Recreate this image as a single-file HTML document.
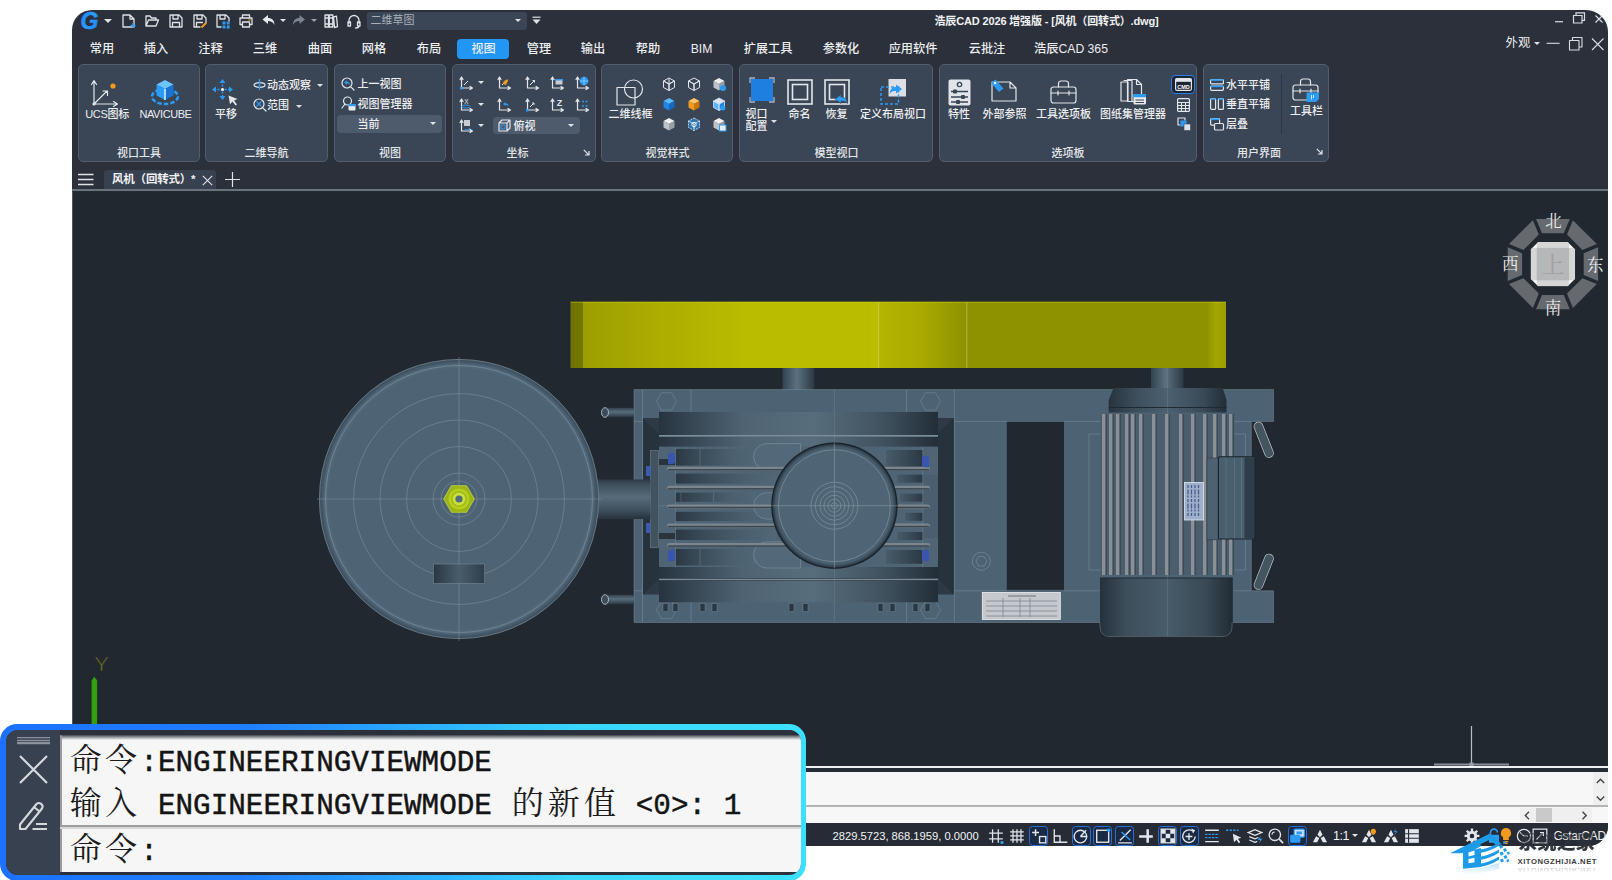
<!DOCTYPE html>
<html lang="zh-CN"><head><meta charset="utf-8"><title>浩辰CAD 2026</title>
<style>
*{box-sizing:border-box;margin:0;padding:0}
html,body{width:1612px;height:880px;overflow:hidden;background:#fff}
body{position:relative;font-family:"Liberation Sans","Noto Sans CJK SC",sans-serif;color:#e6e8ea;font-size:12px}
.abs{position:absolute}
#win{position:absolute;left:72px;top:10px;width:1535.5px;height:836px;background:#2b303b;border-radius:20px 22px 20px 0;overflow:hidden}
.t{position:absolute;white-space:nowrap;line-height:1;color:#e8eaec}
.c{transform:translateX(-50%)}
.tab{position:absolute;top:43.3px;font-size:12.2px;font-weight:500;white-space:nowrap;line-height:1;color:#eceef0;transform:translateX(-50%)}
.panel{position:absolute;top:63.5px;height:98.7px;background:#3a4555;border:1px solid #525d6f;border-radius:5px}
.plabel{position:absolute;top:148.3px;font-size:11px;font-weight:500;line-height:1;white-space:nowrap;color:#e4e7ea;transform:translateX(-50%)}
.rt{position:absolute;margin-top:.5px;font-size:11px;font-weight:500;line-height:1;white-space:nowrap;color:#eceef0}
.rtc{transform:translateX(-50%)}
svg{position:absolute;overflow:visible}
.cj{position:relative;left:-0.2px;letter-spacing:3.16px;font-family:"Noto Serif CJK SC",serif;font-size:32px;-webkit-text-stroke:0;color:#1c1c1c;line-height:1;vertical-align:baseline}
.cj2{letter-spacing:4.2px;left:2.1px}
.ar{position:absolute;width:0;height:0;border-left:3.5px solid transparent;border-right:3.5px solid transparent;border-top:4px solid #e0e3e6}
</style></head>
<body>
<div id="win"></div>
<svg style="left:0;top:0" width="1612" height="880" viewBox="0 0 1612 880">
<defs>
<linearGradient id="gy" x1="0" x2="1" y1="0" y2="0"><stop offset="0" stop-color="#6f7100"/><stop offset="0.019" stop-color="#757700"/><stop offset="0.0195" stop-color="#9c9e00"/><stop offset="0.1" stop-color="#a7a900"/><stop offset="0.27" stop-color="#babc00"/><stop offset="0.47" stop-color="#babc00"/><stop offset="0.4705" stop-color="#b3b500"/><stop offset="0.53" stop-color="#aaac00"/><stop offset="0.6" stop-color="#909300"/><stop offset="0.604" stop-color="#8e9100"/><stop offset="0.97" stop-color="#8e9100"/><stop offset="0.985" stop-color="#a3a500"/><stop offset="1" stop-color="#9b9d00"/></linearGradient>
<linearGradient id="gcylv" x1="0" x2="0" y1="0" y2="1"><stop offset="0" stop-color="#2c3945"/><stop offset="0.12" stop-color="#3d4e5b"/><stop offset="0.45" stop-color="#576c7b"/><stop offset="0.8" stop-color="#3c4c59"/><stop offset="1" stop-color="#27333d"/></linearGradient>
<linearGradient id="gcylh" x1="0" x2="1" y1="0" y2="0"><stop offset="0" stop-color="#33424e"/><stop offset="0.45" stop-color="#5b7080"/><stop offset="1" stop-color="#2c3944"/></linearGradient>
<linearGradient id="gbar" x1="0" x2="1" y1="0" y2="0"><stop offset="0" stop-color="#27343f"/><stop offset="0.3" stop-color="#4f6373"/><stop offset="0.55" stop-color="#586d7c"/><stop offset="0.8" stop-color="#41525f"/><stop offset="1" stop-color="#222e38"/></linearGradient>
<linearGradient id="gband" x1="0" x2="1" y1="0" y2="0"><stop offset="0" stop-color="#2b3844"/><stop offset="0.3" stop-color="#3b4c59"/><stop offset="0.7" stop-color="#4b5f6e"/><stop offset="1" stop-color="#526777"/></linearGradient>
<linearGradient id="gbandr" x1="0" x2="1" y1="0" y2="0"><stop offset="0" stop-color="#485b69"/><stop offset="0.5" stop-color="#3a4a57"/><stop offset="1" stop-color="#2b3844"/></linearGradient>
<linearGradient id="gseg" x1="0" x2="1" y1="0" y2="0"><stop offset="0" stop-color="#2a3742"/><stop offset="0.5" stop-color="#4a5d6b"/><stop offset="1" stop-color="#2f3d49"/></linearGradient>
<linearGradient id="gcap" x1="0" x2="1" y1="0" y2="0"><stop offset="0" stop-color="#27343e"/><stop offset="0.25" stop-color="#3f505d"/><stop offset="0.5" stop-color="#4c606f"/><stop offset="0.8" stop-color="#3a4a57"/><stop offset="1" stop-color="#222d37"/></linearGradient>
<linearGradient id="gfan" x1="0" x2="1" y1="0" y2="0"><stop offset="0" stop-color="#25313b"/><stop offset="0.2" stop-color="#3d4e5b"/><stop offset="0.5" stop-color="#495c6a"/><stop offset="0.8" stop-color="#394955"/><stop offset="1" stop-color="#202b34"/></linearGradient>
<radialGradient id="gdisc" cx="0.5" cy="0.5" r="0.5"><stop offset="0" stop-color="#4e6373"/><stop offset="0.93" stop-color="#4e6373"/><stop offset="0.955" stop-color="#566c7b"/><stop offset="0.975" stop-color="#45596a"/><stop offset="1" stop-color="#3a4b58"/></radialGradient>
<radialGradient id="ggear" cx="0.5" cy="0.5" r="0.5"><stop offset="0" stop-color="#506575"/><stop offset="0.9" stop-color="#4f6474"/><stop offset="0.95" stop-color="#465a69"/><stop offset="1" stop-color="#2b3843"/></radialGradient>
<clipPath id="cv"><rect x="72" y="191.3" width="1535.5" height="575"/></clipPath>
</defs>
<rect x="72" y="191.3" width="1535.5" height="575" fill="#212830"/>
<g clip-path="url(#cv)">
<rect x="72" y="191.5" width="1" height="575" fill="#50565f"/>
<rect x="570.5" y="301.8" width="655.5" height="66.2" fill="url(#gy)"/>
<path d="M878.6 302v66 M966.8 302v66" stroke="#d2d46a" stroke-width=".8" opacity=".7"/>
<path d="M570.5 302.2h655.5" stroke="#d4d620" stroke-width=".8" opacity=".6"/>
<rect x="782.5" y="368" width="31.8" height="44" fill="url(#gcylh)"/>
<rect x="1151" y="368" width="32.5" height="21" fill="url(#gcylh)"/>
<path d="M634 389.6H1273.6V421.4H1251.3V590.8H1273.6V622.5H634z" fill="#4d6272"/>
<rect x="1006.8" y="422" width="57.2" height="167.8" fill="#212830"/>
<g fill="none" stroke="#8fa0ac" stroke-width=".7" opacity=".55"><path d="M634 389.6H1273.6V421.4H1251.3V590.8H1273.6V622.5H634z"/><path d="M642.5 389.6v233 M691 389.6v28 M691 595v27.5 M906.6 389.6v28 M906.6 595v27.5 M954.3 389.6v233 M634 421.4h9 M634 590.8h9 M954.3 421.4h52.5 M954.3 590.8h52.5 M1064 421.4h37 M1064 590.8h37 M1234 421.4h17 M1234 590.8h17"/><rect x="1089" y="434" width="156.6" height="136"/></g>
<polygon points="676.4,401.4 671.4,410.1 661.4,410.1 656.4,401.4 661.4,392.7 671.4,392.7" fill="none" stroke="#8fa0ac" stroke-width=".8" opacity="0.45"/>
<polygon points="940.5,401.4 935.5,410.1 925.5,410.1 920.5,401.4 925.5,392.7 935.5,392.7" fill="none" stroke="#8fa0ac" stroke-width=".8" opacity="0.45"/>
<polygon points="676.4,610 671.4,618.7 661.4,618.7 656.4,610 661.4,601.3 671.4,601.3" fill="none" stroke="#8fa0ac" stroke-width=".8" opacity="0.45"/>
<polygon points="940.5,610 935.5,618.7 925.5,618.7 920.5,610 925.5,601.3 935.5,601.3" fill="none" stroke="#8fa0ac" stroke-width=".8" opacity="0.45"/>
<circle cx="981.4" cy="561.2" r="9" fill="none" stroke="#8fa0ac" stroke-width=".8" opacity=".6"/><polygon points="986.9,561.2 984.1,566 978.6,566 975.9,561.2 978.6,556.4 984.1,556.4" fill="none" stroke="#8fa0ac" stroke-width=".8" opacity="0.6"/>
<rect x="605" y="407.7" width="29" height="9.6" fill="url(#gcylv)"/>
<ellipse cx="605" cy="412.5" rx="3.5" ry="4.8" fill="#3c4c59" stroke="#c9d2d8" stroke-width=".8"/>
<rect x="605" y="594.7" width="29" height="9.6" fill="url(#gcylv)"/>
<ellipse cx="605" cy="599.5" rx="3.5" ry="4.8" fill="#3c4c59" stroke="#c9d2d8" stroke-width=".8"/>
<rect x="643" y="418" width="310.7" height="176.5" fill="#2d3a45"/>
<path d="M643 418l16 16v144.5l-16 16z M953.7 418l-16 16v144.5l16 16z" fill="#26323c"/>
<rect x="659" y="434" width="279" height="144.5" fill="#4f6474"/>
<rect x="659" y="412" width="279" height="23" fill="url(#gbar)"/>
<rect x="659" y="437" width="279" height="9.6" fill="url(#gbar)"/>
<rect x="659" y="567" width="279" height="11" fill="url(#gbar)"/>
<rect x="659" y="580.7" width="279" height="21.5" fill="url(#gbar)"/>
<path d="M659 435.8h279 M659 579.6h279" stroke="#aab6be" stroke-width=".9" opacity=".8"/>
<rect x="675.5" y="449" width="80.5" height="16.5" fill="url(#gband)"/>
<rect x="675.5" y="473.6" width="100.5" height="10" fill="url(#gband)"/>
<rect x="675.5" y="492.7" width="80.5" height="9.100000000000023" fill="url(#gband)"/>
<rect x="675.5" y="511.8" width="100.5" height="9.199999999999989" fill="url(#gband)"/>
<rect x="675.5" y="529.6" width="100.5" height="10.399999999999977" fill="url(#gband)"/>
<rect x="675.5" y="549" width="80.5" height="16.5" fill="url(#gband)"/>
<rect x="886" y="450" width="36.799999999999955" height="16.69999999999999" fill="url(#gbandr)"/>
<rect x="897" y="474.6" width="25.799999999999955" height="8" fill="url(#gbandr)"/>
<rect x="900" y="493.7" width="22.799999999999955" height="8" fill="url(#gbandr)"/>
<rect x="905" y="512.8" width="17.799999999999955" height="8" fill="url(#gbandr)"/>
<rect x="897" y="532" width="25.799999999999955" height="8" fill="url(#gbandr)"/>
<rect x="886" y="550" width="36.799999999999955" height="13.799999999999955" fill="url(#gbandr)"/>
<rect x="922.8" y="475" width="15.2" height="63" fill="#4a5e6d"/>
<path d="M700 449v16.5 M700 549v16.5 M681 492.7v9 M713.6 492.7v9 M675.5 447.3v120 M922.8 447.3v120" stroke="#8fa0ac" stroke-width=".6" opacity=".55"/>
<path d="M766.6 443.6a13 13.199999999999989 0 0 0 0 26.399999999999977h34v-26.399999999999977z" fill="#536878" stroke="#8193a0" stroke-width=".6"/>
<path d="M766.6 492.7a13 13.150000000000006 0 0 0 0 26.30000000000001h34v-26.30000000000001z" fill="#536878" stroke="#8193a0" stroke-width=".6"/>
<path d="M766.6 541.8a13 13.100000000000023 0 0 0 0 26.200000000000045h34v-26.200000000000045z" fill="#536878" stroke="#8193a0" stroke-width=".6"/>
<rect x="667" y="466.7" width="263" height="4" rx="2" fill="#7b858d"/>
<rect x="668" y="469" width="261" height="1.5" fill="#3b464f"/>
<rect x="667" y="485.8" width="263" height="4" rx="2" fill="#7b858d"/>
<rect x="668" y="488.1" width="261" height="1.5" fill="#3b464f"/>
<rect x="667" y="504.4" width="263" height="4" rx="2" fill="#7b858d"/>
<rect x="668" y="506.7" width="261" height="1.5" fill="#3b464f"/>
<rect x="667" y="523.5" width="263" height="4" rx="2" fill="#7b858d"/>
<rect x="668" y="525.8" width="261" height="1.5" fill="#3b464f"/>
<rect x="667" y="543" width="263" height="4" rx="2" fill="#7b858d"/>
<rect x="668" y="545.3" width="261" height="1.5" fill="#3b464f"/>
<rect x="650.5" y="450.7" width="8" height="97" fill="#42535f" stroke="#7f919d" stroke-width=".5"/>
<rect x="659" y="459" width="16" height="6" fill="#2a343d"/><rect x="659" y="533" width="16" height="6" fill="#2a343d"/>
<rect x="646" y="466" width="4.5" height="10" fill="#3d5ab0"/><rect x="646" y="523" width="4.5" height="10" fill="#3d5ab0"/>
<path d="M668 454q5 -3 7 0v9q-2 2 -7 1z" fill="#3a55ad"/>
<path d="M668 551q5 -3 7 0v9q-2 2 -7 1z" fill="#3a55ad"/>
<path d="M929 457q-5 -3 -7 0v9q2 2 7 1z" fill="#3a55ad"/>
<path d="M929 551q-5 -3 -7 0v9q2 2 7 1z" fill="#3a55ad"/>
<circle cx="834.4" cy="505.7" r="63.2" fill="#1b242c"/>
<circle cx="834.4" cy="505.7" r="61.8" fill="url(#ggear)"/>
<g fill="none" stroke="#8fa0ac" stroke-width=".7" opacity=".75"><circle cx="834.4" cy="505.7" r="56"/><circle cx="834.4" cy="505.7" r="3"/><circle cx="834.4" cy="505.7" r="6.5"/><circle cx="834.4" cy="505.7" r="10.5"/><circle cx="834.4" cy="505.7" r="14.5"/><circle cx="834.4" cy="505.7" r="19"/><circle cx="834.4" cy="505.7" r="23.5"/><path d="M772 505.7h125 M834.4 443v125"/></g>
<path d="M834.4 389.6v53 M834.4 568v54 M659 505.7h113" stroke="#8fa0ac" stroke-width=".6" opacity=".4"/>
<rect x="663" y="603.5" width="5" height="8" fill="#2b3843" stroke="#7f919d" stroke-width=".4"/>
<rect x="673" y="603.5" width="5" height="8" fill="#2b3843" stroke="#7f919d" stroke-width=".4"/>
<rect x="700" y="603.5" width="5" height="8" fill="#2b3843" stroke="#7f919d" stroke-width=".4"/>
<rect x="712" y="603.5" width="5" height="8" fill="#2b3843" stroke="#7f919d" stroke-width=".4"/>
<rect x="789" y="603.5" width="5" height="8" fill="#2b3843" stroke="#7f919d" stroke-width=".4"/>
<rect x="803" y="603.5" width="5" height="8" fill="#2b3843" stroke="#7f919d" stroke-width=".4"/>
<rect x="878" y="603.5" width="5" height="8" fill="#2b3843" stroke="#7f919d" stroke-width=".4"/>
<rect x="890" y="603.5" width="5" height="8" fill="#2b3843" stroke="#7f919d" stroke-width=".4"/>
<rect x="913" y="603.5" width="5" height="8" fill="#2b3843" stroke="#7f919d" stroke-width=".4"/>
<rect x="925" y="603.5" width="5" height="8" fill="#2b3843" stroke="#7f919d" stroke-width=".4"/>
<rect x="597" y="479.5" width="53.5" height="39.5" fill="url(#gcylv)"/>
<circle cx="459" cy="499" r="140" fill="url(#gdisc)"/>
<g fill="none" stroke="#8fa0ac" stroke-width=".8" opacity=".55"><circle cx="459" cy="499" r="139.6" stroke="#a9b7c0" opacity=".9"/><circle cx="459" cy="499" r="133.5"/><circle cx="459" cy="499" r="105.4"/><circle cx="459" cy="499" r="79"/><circle cx="459" cy="499" r="52.5"/><circle cx="459" cy="499" r="26"/><circle cx="459" cy="499" r="18"/><path d="M317 499h284 M459 357v284"/></g>
<rect x="433.4" y="564" width="51.2" height="19.5" fill="url(#gseg)" stroke="#7f919d" stroke-width=".5"/>
<polygon points="474.3,499 466.6,512.3 451.4,512.3 443.7,499 451.3,485.7 466.6,485.7" fill="#9db516" stroke="#c2d83c" stroke-width=".8"/>
<circle cx="459" cy="499" r="10.5" fill="#b7d020"/><circle cx="459" cy="499" r="8" fill="#a3bc18"/><circle cx="459" cy="499" r="6.3" fill="#c9e040"/><circle cx="459" cy="499" r="3.6" fill="#54697a"/>
<path d="M1113.5 388H1222.7L1226.5 400V412.5H1108.7V400z" fill="url(#gcap)"/>
<path d="M1108.7 407.5h117.8" stroke="#1f2932" stroke-width="1"/>
<rect x="1100.7" y="414" width="133.7" height="161" fill="#4a5e6d"/>
<rect x="1102" y="414" width="3.6" height="161" fill="#8b9096"/><rect x="1105.6" y="414" width="1.3" height="161" fill="#3a4954"/>
<rect x="1109" y="414" width="3.6" height="161" fill="#8b9096"/><rect x="1112.6" y="414" width="1.3" height="161" fill="#3a4954"/>
<rect x="1116" y="414" width="3.6" height="161" fill="#8b9096"/><rect x="1119.6" y="414" width="1.3" height="161" fill="#3a4954"/>
<rect x="1125" y="414" width="3.6" height="161" fill="#8b9096"/><rect x="1128.6" y="414" width="1.3" height="161" fill="#3a4954"/>
<rect x="1131" y="414" width="3.6" height="161" fill="#8b9096"/><rect x="1134.6" y="414" width="1.3" height="161" fill="#3a4954"/>
<rect x="1139" y="414" width="3.6" height="161" fill="#8b9096"/><rect x="1142.6" y="414" width="1.3" height="161" fill="#3a4954"/>
<rect x="1152" y="414" width="3.6" height="161" fill="#8b9096"/><rect x="1155.6" y="414" width="1.3" height="161" fill="#3a4954"/>
<rect x="1165" y="414" width="3.6" height="161" fill="#8b9096"/><rect x="1168.6" y="414" width="1.3" height="161" fill="#3a4954"/>
<rect x="1179" y="414" width="3.6" height="161" fill="#8b9096"/><rect x="1182.6" y="414" width="1.3" height="161" fill="#3a4954"/>
<rect x="1191" y="414" width="3.6" height="161" fill="#8b9096"/><rect x="1194.6" y="414" width="1.3" height="161" fill="#3a4954"/>
<rect x="1203" y="414" width="3.6" height="161" fill="#8b9096"/><rect x="1206.6" y="414" width="1.3" height="161" fill="#3a4954"/>
<rect x="1213" y="414" width="3.6" height="161" fill="#8b9096"/><rect x="1216.6" y="414" width="1.3" height="161" fill="#3a4954"/>
<rect x="1222" y="414" width="3.6" height="161" fill="#8b9096"/><rect x="1225.6" y="414" width="1.3" height="161" fill="#3a4954"/>
<rect x="1229" y="414" width="3.6" height="161" fill="#8b9096"/><rect x="1232.6" y="414" width="1.3" height="161" fill="#3a4954"/>
<rect x="1207" y="458" width="11.4" height="81.8" fill="#4d6171" stroke="#2c3842" stroke-width=".6"/>
<rect x="1218.4" y="456.8" width="36.4" height="82.2" rx="1.5" fill="#4a5f6e" stroke="#19222a" stroke-width="1.1"/>
<rect x="1244.5" y="457.4" width="9.8" height="81" fill="#2e3d47"/>
<path d="M1226 457.5v81 M1234.5 457.5v81 M1241.5 457.5v81" stroke="#62778a" stroke-width=".8" opacity=".8"/>
<rect x="1184.5" y="482.5" width="19" height="37.5" fill="#9fb0cc" stroke="#dfe6f0" stroke-width=".8"/>
<path d="M1188 485v32 M1191.5 485v32 M1195 485v32 M1198.5 485v32" stroke="#4a5c86" stroke-width="1.3" stroke-dasharray="3 1.5 5 1 2 1.5"/>
<path d="M1100 578H1232.8V626a10 10 0 0 1 -10 10H1110a10 10 0 0 1 -10 -10z" fill="url(#gfan)"/>
<path d="M1100 578h132.8" stroke="#1f2932" stroke-width="1"/>
<path d="M1167.3 368v268" stroke="#8fa0ac" stroke-width=".6" opacity=".45"/>
<path d="M1100 622.5v5a9 9 0 0 0 9 9h114a9 9 0 0 0 9-9v-5" fill="none" stroke="#8fa0ac" stroke-width=".7" opacity=".6"/>
<path d="M1258.5 426.5l10.5 26.5" stroke="#b9c4cc" stroke-width="9.6" stroke-linecap="round"/><path d="M1258.5 426.5l10.5 26.5" stroke="#44555f" stroke-width="8.2" stroke-linecap="round"/>
<path d="M1269 558.5l-10.5 26.5" stroke="#b9c4cc" stroke-width="9.6" stroke-linecap="round"/><path d="M1269 558.5l-10.5 26.5" stroke="#44555f" stroke-width="8.2" stroke-linecap="round"/>
<rect x="982.3" y="592.4" width="78" height="27" fill="#c5c9cd" stroke="#eef0f2" stroke-width=".8"/>
<path d="M986 601h71 M986 606h71 M986 611h71 M986 616h71 M1003 598v19 M1020 598v19 M1030 598v19" stroke="#7d858d" stroke-width=".8"/><path d="M1008 596h28" stroke="#6a727a" stroke-width="1"/>
<path d="M91.6 725V680.5L94.3 676.8 97.1 680.5V725z" fill="#33a00f"/>
<text x="101.6" y="670.8" text-anchor="middle" font-family="Liberation Sans,sans-serif" font-size="19.5" textLength="15" lengthAdjust="spacingAndGlyphs" fill="#707122" stroke="#212830" stroke-width=".6" paint-order="fill stroke">Y</text>
<path d="M1471.5 726v39" stroke="#b9bec4" stroke-width="1.2"/><path d="M1434 764.5h75" stroke="#8b9097" stroke-width="2"/><rect x="1469.5" y="762.5" width="4" height="4" fill="#9aa0a7"/>
</g>
<polygon points="1536,218.9 1569.8,218.9 1563.8,233.3 1542,233.3" fill="#66696d"/>
<polygon points="1572.9,220.2 1596.8,244.1 1582.4,250 1567,234.6" fill="#66696d"/>
<polygon points="1598.1,247.2 1598.1,281 1583.7,275 1583.7,253.2" fill="#66696d"/>
<polygon points="1596.8,284.1 1572.9,308 1567,293.6 1582.4,278.2" fill="#66696d"/>
<polygon points="1569.8,309.3 1536,309.3 1542,294.9 1563.8,294.9" fill="#66696d"/>
<polygon points="1532.9,308 1509,284.1 1523.4,278.2 1538.8,293.6" fill="#66696d"/>
<polygon points="1507.7,281 1507.7,247.2 1522.1,253.2 1522.1,275" fill="#66696d"/>
<polygon points="1509,244.1 1532.9,220.2 1538.8,234.6 1523.4,250" fill="#66696d"/>
<clipPath id="nvc"><path d="M1538.2 241.90000000000003H1567.6000000000001L1575.1000000000001 249.40000000000003V278.8L1567.6000000000001 286.3H1538.2L1530.7 278.8V249.40000000000003z"/></clipPath>
<g clip-path="url(#nvc)"><rect x="1530.7" y="241.90000000000003" width="44.4" height="44.4" fill="#fbfbfb"/>
<rect x="1536.7" y="241.90000000000003" width="32.4" height="44.4" fill="#d6d6d6"/><rect x="1530.7" y="247.90000000000003" width="44.4" height="32.4" fill="#d6d6d6"/>
<rect x="1536.7" y="247.90000000000003" width="32.4" height="32.4" fill="#b6b7b8"/></g>
<text x="1552.9" y="272.6" font-family="Noto Serif CJK SC,serif" text-anchor="middle" font-size="23" fill="#a0a1a2">上</text>
<text x="1553.4" y="227.3" font-family="Noto Serif CJK SC,serif" text-anchor="middle" font-size="16.5" fill="#ececec">北</text>
<text x="1552.9" y="313.90000000000003" font-family="Noto Serif CJK SC,serif" text-anchor="middle" font-size="16.5" fill="#ececec">南</text>
<text x="1510.2" y="270.40000000000003" font-family="Noto Serif CJK SC,serif" text-anchor="middle" font-size="16.5" fill="#ececec">西</text>
<text x="1595.2" y="270.90000000000003" font-family="Noto Serif CJK SC,serif" text-anchor="middle" font-size="16.5" fill="#ececec">东</text>
</svg>
<div id="ui">
<svg style="left:79px;top:11px" width="22" height="20" viewBox="0 0 22 20" ><defs><linearGradient id="lg" x1="0" y1="0" x2="1" y2="1"><stop offset="0" stop-color="#1e7bff"/><stop offset=".5" stop-color="#2a9dff"/><stop offset="1" stop-color="#1a78f0"/></linearGradient></defs><text x="1.5" y="18.2" font-family="Liberation Sans,sans-serif" font-size="23" font-weight="bold" font-style="italic" fill="url(#lg)" stroke="url(#lg)" stroke-width=".6">G</text></svg>
<div class="ar" style="left:103.5px;top:18.8px;border-left-width:4px;border-right-width:4px;border-top-width:4.5px"></div><svg style="left:122px;top:14px" width="14" height="14" viewBox="0 0 14 14" ><path d="M1 1h7l4 4v8h-11z M8 1v4h4" fill="none" stroke="#dfe2e6" stroke-width="1.3" stroke-linejoin="round" stroke-linecap="round"/><path d="M11 9v5M8.5 11.5h5" stroke="#2b9bf4" stroke-width="1.4" fill="none"/></svg>
<svg style="left:145px;top:14px" width="14" height="14" viewBox="0 0 14 14" ><path d="M1 12V2h4l1.5 2H11v2 M1 12l2.5-6H13.5l-2.5 6z" fill="none" stroke="#dfe2e6" stroke-width="1.3" stroke-linejoin="round" stroke-linecap="round"/></svg>
<svg style="left:169px;top:14px" width="14" height="14" viewBox="0 0 14 14" ><path d="M1 1h9l3 3v9h-12z M4 1v4h5V1 M3.5 13V8.5h7V13" fill="none" stroke="#dfe2e6" stroke-width="1.3" stroke-linejoin="round" stroke-linecap="round"/></svg>
<svg style="left:192.5px;top:14px" width="14" height="14" viewBox="0 0 14 14" ><path d="M1 1h9l3 3v5 M1 1v12h6 M4 1v4h5V1 M3.5 13V8.5h6" fill="none" stroke="#dfe2e6" stroke-width="1.3" stroke-linejoin="round" stroke-linecap="round"/><path d="M8.5 13.5l4.5-4.5" stroke="#f39a1e" stroke-width="2" fill="none"/></svg>
<svg style="left:216px;top:14px" width="14" height="14" viewBox="0 0 14 14" ><path d="M1 1h9l3 3v3 M1 1v12h4 M4 1v4h5V1" fill="none" stroke="#dfe2e6" stroke-width="1.3" stroke-linejoin="round" stroke-linecap="round"/><g fill="#2b9bf4"><rect x="6.5" y="7.5" width="3" height="3"/><rect x="10.7" y="7.5" width="3" height="3"/><rect x="6.5" y="11.5" width="3" height="3"/><rect x="10.7" y="11.5" width="3" height="3"/></g></svg>
<svg style="left:239px;top:14px" width="14" height="14" viewBox="0 0 14 14" ><path d="M3.5 4V1h7v3 M3.5 10.5H1V4h12v6.5h-2.5 M3.5 8h7v5h-7z" fill="none" stroke="#dfe2e6" stroke-width="1.3" stroke-linejoin="round" stroke-linecap="round"/><path d="M9.5 6h2" stroke="#f39a1e" stroke-width="1.3"/></svg>
<svg style="left:262px;top:14px" width="14" height="13" viewBox="0 0 14 13" ><path d="M6 1L0.5 5.5 6 10V7c3 0 5 1 6.5 4C12.5 6.5 10 4 6 4z" fill="#e6e8ea"/></svg>
<div class="ar" style="left:280px;top:19px;border-left-width:3px;border-right-width:3px;border-top-width:3.5px"></div><svg style="left:292px;top:14px" width="14" height="13" viewBox="0 0 14 13" ><path d="M7.5 1L13 5.5 7.5 10V7c-3 0-5 1-6.5 4C1 6.5 3.5 4 7.5 4z" fill="#7d8590"/></svg>
<div class="ar" style="left:311px;top:19px;border-left-width:3px;border-right-width:3px;border-top-width:3.5px;border-top-color:#9aa1ab"></div><svg style="left:324px;top:14px" width="14" height="14" viewBox="0 0 14 14" ><path d="M1 1h3.5v12H1z M5.3 1h3.5v12H5.3z M9.5 3l3-.8 1 10.5-3 .8z M1 4h3.5 M5.3 4h3.5 M1 10h3.5 M5.3 10h3.5" fill="none" stroke="#dfe2e6" stroke-width="1.3" stroke-linejoin="round" stroke-linecap="round"/></svg>
<svg style="left:347px;top:14px" width="14" height="14" viewBox="0 0 14 14" ><path d="M2 9V6.5a5 5 0 0 1 10 0V9 M1 8h2.5v4H1z M10.5 8H13v4h-2.5z M12 12c0 1.5-1.5 2-3.5 2" fill="none" stroke="#dfe2e6" stroke-width="1.3" stroke-linejoin="round" stroke-linecap="round"/></svg>
<div class="abs" style="left:366.5px;top:12px;width:160px;height:18px;background:#3a4555;border-radius:3px"></div><div class="t" style="left:370.5px;top:15px;font-size:11px;color:#a9b0b9">二维草图</div><div class="ar" style="left:514.5px;top:19px;border-left-width:3px;border-right-width:3px;border-top-width:3.5px"></div><svg style="left:532px;top:16px" width="9" height="9" viewBox="0 0 9 9" ><path d="M0.5 1.2h8" stroke="#dfe2e6" stroke-width="1.2"/><path d="M0.5 3.5h8l-4 4.5z" fill="#dfe2e6"/></svg>
<div class="t" style="left:934.5px;top:16.2px;font-size:11px;font-weight:bold;letter-spacing:-0.15px;color:#f1f2f4" id="ttl">浩辰CAD 2026 增强版 - [风机（回转式）.dwg]</div><svg style="left:1554px;top:12px" width="50" height="13" viewBox="0 0 50 13" ><path d="M1 9.7h8" stroke="#d9dce0" stroke-width="1.2"/><path d="M19.5 3.5h8.5v7.5h-8.5z M22 3.5V.8h8.5v7.5H28" fill="none" stroke="#d9dce0" stroke-width="1.2"/><path d="M41.5 3.5l7 7 M48.5 3.5l-7 7" stroke="#d9dce0" stroke-width="1.2"/></svg>
<div class="t" style="left:1505.5px;top:37px;font-size:12.4px">外观</div><div class="ar" style="left:1533.5px;top:42px;border-left-width:3px;border-right-width:3px;border-top-width:3.5px"></div><svg style="left:1546px;top:36px" width="60" height="16" viewBox="0 0 60 16" ><path d="M.6 7.3h13" stroke="#d9dce0" stroke-width="1.1"/><path d="M23.5 4.5h9.5v9.5h-9.5z M26.5 4.5V1.5h9.5V11H33" fill="none" stroke="#d9dce0" stroke-width="1.1" stroke-linejoin="round"/><path d="M46 2.5l11.5 11.5 M57.5 2.5l-11.5 11.5" stroke="#d9dce0" stroke-width="1.1"/></svg>
<div class="abs" style="left:457px;top:38.5px;width:51.5px;height:20px;background:#2196f3;border-radius:4px"></div>
<div class="tab" style="left:102px">常用</div>
<div class="tab" style="left:156px">插入</div>
<div class="tab" style="left:210.5px">注释</div>
<div class="tab" style="left:265px">三维</div>
<div class="tab" style="left:320px">曲面</div>
<div class="tab" style="left:374px">网格</div>
<div class="tab" style="left:429px">布局</div>
<div class="tab" style="left:483.5px">视图</div>
<div class="tab" style="left:539px">管理</div>
<div class="tab" style="left:593px">输出</div>
<div class="tab" style="left:648px">帮助</div>
<div class="tab" style="left:701.5px">BIM</div>
<div class="tab" style="left:768px">扩展工具</div>
<div class="tab" style="left:841px">参数化</div>
<div class="tab" style="left:913px">应用软件</div>
<div class="tab" style="left:987px">云批注</div>
<div class="tab" style="left:1071px">浩辰CAD 365</div>
<div class="panel" style="left:77.5px;width:122.5px"></div>
<div class="plabel" style="left:139px">视口工具</div>
<div class="panel" style="left:205px;width:122.5px"></div>
<div class="plabel" style="left:266.5px">二维导航</div>
<div class="panel" style="left:333.5px;width:112.5px"></div>
<div class="plabel" style="left:390px">视图</div>
<div class="panel" style="left:452px;width:144px"></div>
<div class="plabel" style="left:517.5px">坐标</div>
<div class="panel" style="left:601px;width:132px"></div>
<div class="plabel" style="left:667.5px">视觉样式</div>
<div class="panel" style="left:739px;width:193.5px"></div>
<div class="plabel" style="left:836.5px">模型视口</div>
<div class="panel" style="left:938.5px;width:258.5px"></div>
<div class="plabel" style="left:1068px">选项板</div>
<div class="panel" style="left:1202.5px;width:126px"></div>
<div class="plabel" style="left:1259px">用户界面</div>
<svg style="left:90px;top:78px" width="30" height="30" viewBox="0 0 30 30" ><path d="M4 3v23h23 M1.5 6.5l2.5-4 2.5 4 M23.5 23.5l4 2.5-4 2.5 M4 26l13-13 M13 13h4.5v4.5" fill="none" stroke="#e3e6ea" stroke-width="1.2" stroke-linejoin="round" stroke-linecap="round"/><circle cx="4" cy="26" r="1.6" fill="#e3e6ea"/><circle cx="23" cy="8" r="2.6" fill="#f39a1e"/></svg>

<div class="rt rtc" style="left:107px;top:108.5px;letter-spacing:-0.3px">UCS图标</div>
<svg style="left:150px;top:79px" width="30" height="27" viewBox="0 0 30 27" ><ellipse cx="15" cy="17.5" rx="13" ry="7.5" fill="none" stroke="#2b9bf4" stroke-width="2.6" stroke-dasharray="4.5 2"/><path d="M15 1l8.5 4.5-8.5 4.5-8.5-4.5z" fill="#6cc4ff"/><path d="M6.5 5.5l8.5 4.5v11l-8.5-4.5z" fill="#2b9bf4"/><path d="M23.5 5.5l-8.5 4.5v11l8.5-4.5z" fill="#1a73d0"/><path d="M15 10v11" stroke="#d6ecff" stroke-width="1.6"/></svg>

<div class="rt rtc" style="left:165.5px;top:108.5px;letter-spacing:-0.42px">NAVICUBE</div>
<svg style="left:211px;top:79px" width="30" height="28" viewBox="0 0 30 28" ><path d="M11.5 2v17 M3 10.5h17" stroke="#2b9bf4" stroke-width="1.3" stroke-dasharray="2.2 1.3"/><path d="M11.5 0l3 4h-6z M11.5 21l3-4h-6z M1 10.5l4-3v6z M22 10.5l-4-3v6z" fill="#2b9bf4"/><circle cx="11.5" cy="10.5" r="1.5" fill="#fff"/><path d="M17.5 16.5l9 3.5-3.5 1.5 3 4-1.5 1-3-4-2.5 2.8z" fill="#e6e8ea"/></svg>

<div class="rt rtc" style="left:226px;top:108.5px">平移</div>
<svg style="left:253px;top:78px" width="13" height="13" viewBox="0 0 13 13" ><ellipse cx="6.5" cy="7" rx="5.5" ry="2.3" fill="none" stroke="#e3e6ea" stroke-width="1.2" stroke-linejoin="round" stroke-linecap="round"/><path d="M6.5 1v11" stroke="#2b9bf4" stroke-width="1.4"/></svg>

<div class="rt" style="left:267px;top:79.5px">动态观察</div>
<div class="ar" style="left:316.5px;top:84px;border-left-width:3px;border-right-width:3px;border-top-width:3.5px"></div>
<svg style="left:253px;top:97.5px" width="14" height="14" viewBox="0 0 14 14" ><circle cx="6" cy="6" r="5" fill="none" stroke="#e3e6ea" stroke-width="1.2" stroke-linejoin="round" stroke-linecap="round"/><path d="M9.8 9.8l3.2 3.2" fill="none" stroke="#e3e6ea" stroke-width="1.2" stroke-linejoin="round" stroke-linecap="round"/><path d="M3.5 3.5l5 5 M8.5 3.5l-5 5" stroke="#2b9bf4" stroke-width="1.2"/></svg>

<div class="rt" style="left:267px;top:99.5px">范围</div>
<div class="ar" style="left:295.5px;top:104.5px;border-left-width:3px;border-right-width:3px;border-top-width:3.5px"></div>
<svg style="left:341px;top:77px" width="14" height="14" viewBox="0 0 14 14" ><circle cx="6" cy="6" r="5" fill="none" stroke="#e3e6ea" stroke-width="1.2" stroke-linejoin="round" stroke-linecap="round"/><path d="M9.8 9.8l3.2 3.2" fill="none" stroke="#e3e6ea" stroke-width="1.2" stroke-linejoin="round" stroke-linecap="round"/><path d="M6 3.2L3 5.5l3 2.3V6.5c1.5 0 2.5.5 3 1.5 0-2-1-3.3-3-3.3z" fill="#2b9bf4"/></svg>

<div class="rt" style="left:357.5px;top:78px">上一视图</div>
<svg style="left:341px;top:96px" width="15" height="15" viewBox="0 0 15 15" ><circle cx="6.5" cy="5" r="4" fill="none" stroke="#e3e6ea" stroke-width="1.2" stroke-linejoin="round" stroke-linecap="round"/><path d="M4 8l-3 4" fill="none" stroke="#e3e6ea" stroke-width="1.2" stroke-linejoin="round" stroke-linecap="round"/><rect x="7.5" y="8" width="7" height="6.5" rx="1" fill="#e8eaec"/><rect x="7.5" y="8" width="7" height="2.2" fill="#2b9bf4"/></svg>

<div class="rt" style="left:357.5px;top:98px">视图管理器</div>
<div class="abs" style="left:336.5px;top:115px;width:105.5px;height:17.5px;background:#4e5b6d;border-radius:4px"></div>
<div class="rt" style="left:357.5px;top:118.5px">当前</div>
<div class="ar" style="left:430px;top:122px;border-left-width:3px;border-right-width:3px;border-top-width:3.5px"></div>
<svg style="left:458.5px;top:75.5px" width="14" height="14" viewBox="0 0 14 14" ><path d="M2.5 1.5v10.5h10.5 M1 3.5l1.5-2.5 1.5 2.5 M11 10.5l2.5 1.5-2.5 1.5" fill="none" stroke="#e3e6ea" stroke-width="1.2" stroke-linejoin="round" stroke-linecap="round"/><rect x="1" y="11" width="2.5" height="2.5" fill="#2b9bf4"/><path d="M5 9l4-4" stroke="#e3e6ea" stroke-width="1"/></svg>

<svg style="left:458.5px;top:97.5px" width="14" height="14" viewBox="0 0 14 14" ><path d="M2.5 1.5v10.5h10.5 M1 3.5l1.5-2.5 1.5 2.5 M11 10.5l2.5 1.5-2.5 1.5" fill="none" stroke="#e3e6ea" stroke-width="1.2" stroke-linejoin="round" stroke-linecap="round"/><text x="7.5" y="6" text-anchor="middle" font-family="Liberation Sans,sans-serif" font-size="6.5" fill="#e3e6ea">X</text><ellipse cx="7" cy="8.5" rx="4" ry="1.5" fill="none" stroke="#2b9bf4" stroke-width="1"/></svg>

<svg style="left:458.5px;top:118.5px" width="14" height="14" viewBox="0 0 14 14" ><path d="M2.5 1.5v10.5h10.5 M1 3.5l1.5-2.5 1.5 2.5 M11 10.5l2.5 1.5-2.5 1.5" fill="none" stroke="#e3e6ea" stroke-width="1.2" stroke-linejoin="round" stroke-linecap="round"/><rect x="5" y="1" width="6" height="6" fill="#c8ccd2"/><path d="M6 10.5c2 1 4 0 5-1.5" stroke="#2b9bf4" stroke-width="1.2" fill="none"/></svg>

<div class="ar" style="left:477.5px;top:81px;border-left-width:3px;border-right-width:3px;border-top-width:3.5px"></div>
<div class="ar" style="left:477.5px;top:103px;border-left-width:3px;border-right-width:3px;border-top-width:3.5px"></div>
<div class="ar" style="left:477.5px;top:124px;border-left-width:3px;border-right-width:3px;border-top-width:3.5px"></div>
<svg style="left:497px;top:75.5px" width="14" height="14" viewBox="0 0 14 14" ><path d="M2.5 1.5v10.5h10.5 M1 3.5l1.5-2.5 1.5 2.5 M11 10.5l2.5 1.5-2.5 1.5" fill="none" stroke="#e3e6ea" stroke-width="1.2" stroke-linejoin="round" stroke-linecap="round"/><path d="M5 9l4-4" stroke="#e3e6ea" stroke-width="1"/><path d="M6 8c0-3 2-4.5 5.5-4.5L9 9z" fill="#f39a1e"/></svg>

<svg style="left:525px;top:75.5px" width="14" height="14" viewBox="0 0 14 14" ><path d="M2.5 1.5v10.5h10.5 M1 3.5l1.5-2.5 1.5 2.5 M11 10.5l2.5 1.5-2.5 1.5" fill="none" stroke="#e3e6ea" stroke-width="1.2" stroke-linejoin="round" stroke-linecap="round"/><path d="M5 9l4.5-4.5 M7.5 4.5h2v2" stroke="#e3e6ea" stroke-width="1" fill="none"/></svg>

<svg style="left:550px;top:75.5px" width="14" height="14" viewBox="0 0 14 14" ><path d="M2.5 1.5v10.5h10.5 M1 3.5l1.5-2.5 1.5 2.5 M11 10.5l2.5 1.5-2.5 1.5" fill="none" stroke="#e3e6ea" stroke-width="1.2" stroke-linejoin="round" stroke-linecap="round"/><rect x="5.5" y="3" width="7" height="5.5" fill="#c8ccd2"/><rect x="5.5" y="3" width="7" height="1.5" fill="#2b9bf4"/></svg>

<svg style="left:575px;top:75.5px" width="14" height="14" viewBox="0 0 14 14" ><path d="M2.5 1.5v10.5h10.5 M1 3.5l1.5-2.5 1.5 2.5 M11 10.5l2.5 1.5-2.5 1.5" fill="none" stroke="#e3e6ea" stroke-width="1.2" stroke-linejoin="round" stroke-linecap="round"/><circle cx="9" cy="5" r="4.3" fill="#2b9bf4"/><path d="M4.7 5h8.6 M9 .7v8.6" stroke="#9fd2ff" stroke-width=".7"/></svg>

<svg style="left:497px;top:97.5px" width="14" height="14" viewBox="0 0 14 14" ><path d="M2.5 1.5v10.5h10.5 M1 3.5l1.5-2.5 1.5 2.5 M11 10.5l2.5 1.5-2.5 1.5" fill="none" stroke="#e3e6ea" stroke-width="1.2" stroke-linejoin="round" stroke-linecap="round"/><path d="M8.5 4L6 6l2.5 2V7c1.5 0 2.5.5 3 1.5 0-2-1-3.2-3-3.2z" fill="#2b9bf4"/></svg>

<svg style="left:525px;top:97.5px" width="14" height="14" viewBox="0 0 14 14" ><path d="M2.5 1.5v10.5h10.5 M1 3.5l1.5-2.5 1.5 2.5 M11 10.5l2.5 1.5-2.5 1.5" fill="none" stroke="#e3e6ea" stroke-width="1.2" stroke-linejoin="round" stroke-linecap="round"/><rect x="1" y="11" width="2.5" height="2.5" fill="#2b9bf4"/><path d="M5 9l4-4 M7 5h2v2" stroke="#e3e6ea" stroke-width="1" fill="none"/></svg>

<svg style="left:550px;top:97.5px" width="14" height="14" viewBox="0 0 14 14" ><path d="M2.5 1.5v10.5h10.5 M1 3.5l1.5-2.5 1.5 2.5 M11 10.5l2.5 1.5-2.5 1.5" fill="none" stroke="#e3e6ea" stroke-width="1.2" stroke-linejoin="round" stroke-linecap="round"/><text x="9.5" y="8.3" text-anchor="middle" font-family="Liberation Sans,sans-serif" font-weight="bold" font-size="9" fill="#e3e6ea">Z</text></svg>

<svg style="left:575px;top:97.5px" width="14" height="14" viewBox="0 0 14 14" ><path d="M2.5 1.5v10.5h10.5 M1 3.5l1.5-2.5 1.5 2.5 M11 10.5l2.5 1.5-2.5 1.5" fill="none" stroke="#e3e6ea" stroke-width="1.2" stroke-linejoin="round" stroke-linecap="round"/><path d="M7 3.5h6 M7 8h6" stroke="#2b9bf4" stroke-width="1.5" stroke-dasharray="2 1.5"/></svg>

<div class="abs" style="left:493px;top:116.5px;width:87px;height:17.5px;background:#4e5b6d;border-radius:4px"></div>
<svg style="left:498px;top:119px" width="13" height="13" viewBox="0 0 13 13" ><path d="M1 4h8v8H1z M1 4l3-3h8l-3 3 M12 1v8l-3 3" fill="none" stroke="#e3e6ea" stroke-width="1.2" stroke-linejoin="round" stroke-linecap="round"/><path d="M3 6h4v4H3z" fill="none" stroke="#2b9bf4" stroke-width=".9"/></svg>

<div class="rt" style="left:513.5px;top:120px">俯视</div>
<div class="ar" style="left:568px;top:123.5px;border-left-width:3px;border-right-width:3px;border-top-width:3.5px"></div>
<svg style="left:583px;top:149px" width="7" height="7" viewBox="0 0 7 7" ><path d="M.8.8l5 5 M6 2v4H2" stroke="#e3e6ea" stroke-width="1.2" fill="none"/></svg>

<svg style="left:616px;top:78.5px" width="28" height="27" viewBox="0 0 28 27" ><rect x="1" y="8.5" width="18" height="17.5" fill="none" stroke="#e3e6ea" stroke-width="1.2" stroke-linejoin="round" stroke-linecap="round"/><circle cx="17.5" cy="10" r="9" fill="none" stroke="#e3e6ea" stroke-width="1.2" stroke-linejoin="round" stroke-linecap="round"/></svg>

<div class="rt rtc" style="left:630.5px;top:108.5px">二维线框</div>
<svg style="left:662px;top:77px" width="14" height="15" viewBox="0 0 14 15" ><path d="M7 1l5.5 3-5.5 3-5.5-3z M1.5 4l5.5 3v6.5l-5.5-3z M12.5 4l-5.5 3v6.5l5.5-3z M7 7V1.5" fill="none" stroke="#e3e6ea" stroke-width="1"/></svg>

<svg style="left:686.5px;top:77px" width="14" height="15" viewBox="0 0 14 15" ><path d="M7 1l5.5 3-5.5 3-5.5-3z M1.5 4l5.5 3v6.5l-5.5-3z M12.5 4l-5.5 3v6.5l5.5-3z" fill="none" stroke="#e3e6ea" stroke-width="1"/></svg>

<svg style="left:711.5px;top:77px" width="14" height="15" viewBox="0 0 14 15" ><path d="M7 1l5.5 3-5.5 3-5.5-3z" fill="#f0f0f0"/><path d="M1.5 4l5.5 3v6.5l-5.5-3z" fill="#bfc3c8"/><path d="M12.5 4l-5.5 3v6.5l5.5-3z" fill="#9a9fa6"/><circle cx="11" cy="11" r="3" fill="#2b9bf4"/></svg>

<svg style="left:662px;top:96.7px" width="14" height="15" viewBox="0 0 14 15" ><path d="M7 1l5.5 3-5.5 3-5.5-3z" fill="#59b6ff"/><path d="M1.5 4l5.5 3v6.5l-5.5-3z" fill="#1f86e8"/><path d="M12.5 4l-5.5 3v6.5l5.5-3z" fill="#1668c0"/></svg>

<svg style="left:686.5px;top:96.7px" width="14" height="15" viewBox="0 0 14 15" ><path d="M7 1l5.5 3-5.5 3-5.5-3z" fill="#ffc46a"/><path d="M1.5 4l5.5 3v6.5l-5.5-3z" fill="#f39a1e"/><path d="M12.5 4l-5.5 3v6.5l5.5-3z" fill="#c8770a"/></svg>

<svg style="left:711.5px;top:96.7px" width="14" height="15" viewBox="0 0 14 15" ><path d="M7 1l5.5 3-5.5 3-5.5-3z" fill="#dfe6ee"/><path d="M1.5 4l5.5 3v6.5l-5.5-3z" fill="#59b6ff"/><path d="M12.5 4l-5.5 3v6.5l5.5-3z" fill="#1f86e8"/><path d="M7 1l5.5 3-5.5 3-5.5-3z M1.5 4l5.5 3v6.5l-5.5-3z M12.5 4l-5.5 3v6.5l5.5-3z" fill="none" stroke="#cfe6ff" stroke-width=".8"/><circle cx="11" cy="11" r="2.5" fill="#2b9bf4"/></svg>

<svg style="left:662px;top:116.5px" width="14" height="15" viewBox="0 0 14 15" ><path d="M7 1l5.5 3-5.5 3-5.5-3z" fill="#f0f0f0"/><path d="M1.5 4l5.5 3v6.5l-5.5-3z" fill="#bfc3c8"/><path d="M12.5 4l-5.5 3v6.5l5.5-3z" fill="#9a9fa6"/></svg>

<svg style="left:686.5px;top:116.5px" width="14" height="15" viewBox="0 0 14 15" ><path d="M7 1l5.5 3-5.5 3-5.5-3z M1.5 4l5.5 3v6.5l-5.5-3z M12.5 4l-5.5 3v6.5l5.5-3z" fill="#2b9bf4" fill-opacity=".55" stroke="#bfe0ff" stroke-width=".9" stroke-dasharray="2 1"/><circle cx="7" cy="7.5" r="2.2" fill="none" stroke="#fff" stroke-width=".9"/></svg>

<svg style="left:711.5px;top:116.5px" width="14" height="15" viewBox="0 0 14 15" ><path d="M7 1l5.5 3-5.5 3-5.5-3z" fill="#f0f0f0"/><path d="M1.5 4l5.5 3v6.5l-5.5-3z" fill="#bfc3c8"/><path d="M12.5 4l-5.5 3v6.5l5.5-3z" fill="#9a9fa6"/><rect x="7.5" y="8" width="6.5" height="6" fill="#e8eaec" stroke="#2b9bf4" stroke-width="1"/></svg>

<svg style="left:748.5px;top:77px" width="26" height="26" viewBox="0 0 26 26" ><rect x="2" y="2" width="22" height="22" fill="#1f7fe0"/><path d="M1 6V1h5 M20 1h5v5 M25 20v5h-5 M6 25H1v-5" fill="none" stroke="#aab2bc" stroke-width="1.3"/></svg>

<div class="rt" style="left:745.5px;top:108.5px">视口</div>
<div class="rt" style="left:745.5px;top:120.5px">配置</div>
<div class="ar" style="left:771px;top:119.5px;border-left-width:3px;border-right-width:3px;border-top-width:3.5px"></div>
<svg style="left:786.5px;top:79px" width="26" height="26" viewBox="0 0 26 26" ><rect x="1" y="1" width="24" height="24" fill="none" stroke="#e3e6ea" stroke-width="1.6"/><rect x="5.5" y="5.5" width="15" height="15" fill="none" stroke="#e3e6ea" stroke-width="1.6"/></svg>

<div class="rt rtc" style="left:799.5px;top:108.5px">命名</div>
<svg style="left:824px;top:79px" width="26" height="26" viewBox="0 0 26 26" ><rect x="1" y="1" width="24" height="24" fill="none" stroke="#e3e6ea" stroke-width="1.6"/><rect x="5.5" y="5.5" width="15" height="15" fill="none" stroke="#e3e6ea" stroke-width="1.6"/><path d="M17 15.5l-6 4.5 6 4.5v-2.5c3 0 5 .5 6.5 2.5-.5-4-2.5-6.5-6.5-6.5z" fill="#2b9bf4" stroke="#3a4555" stroke-width=".6"/></svg>

<div class="rt rtc" style="left:836.5px;top:108.5px">恢复</div>
<svg style="left:879.5px;top:78px" width="27" height="27" viewBox="0 0 27 27" ><rect x="8.5" y="1" width="17.5" height="17.5" fill="#dcdfe3"/><rect x="1" y="9" width="17.5" height="17" fill="none" stroke="#2b9bf4" stroke-width="1.5" stroke-dasharray="3 2"/><path d="M16 6.5l6 4.5-6 4.5v-2.5c-3 0-5 .5-6.5 3 .5-4.5 2.5-7 6.5-7z" fill="#2b9bf4"/></svg>

<div class="rt rtc" style="left:893px;top:108.5px">定义布局视口</div>
<svg style="left:947.5px;top:79px" width="23" height="27" viewBox="0 0 23 27" ><rect x=".5" y=".5" width="22" height="26" rx="2" fill="#e1e4e8"/><circle cx="11.5" cy="5.5" r="2.8" fill="#3a4555"/><circle cx="11.5" cy="5.5" r="1.5" fill="#e1e4e8"/><path d="M3 12.5h17 M3 18h17 M3 23h17" stroke="#3a4555" stroke-width="1.5"/><rect x="5" y="10.5" width="4" height="4" rx="1" fill="#3a4555"/><rect x="13" y="16" width="4" height="4" rx="1" fill="#3a4555"/><rect x="8" y="21" width="4" height="4" rx="1" fill="#3a4555"/></svg>

<div class="rt rtc" style="left:959px;top:108.5px">特性</div>
<svg style="left:990px;top:79px" width="28" height="25" viewBox="0 0 28 25" ><path d="M2 3h18l6 6v13H2z M20 3v6h6" fill="none" stroke="#e3e6ea" stroke-width="1.2" stroke-linejoin="round" stroke-linecap="round"/><path d="M1 4l4.5-3.5 8 9-4.5 3.5z" fill="#2b9bf4"/><circle cx="5" cy="4" r="1.3" fill="#e8f3ff"/></svg>

<div class="rt rtc" style="left:1004.5px;top:108.5px">外部参照</div>
<svg style="left:1049.5px;top:80px" width="27" height="24" viewBox="0 0 27 24" ><rect x="1" y="7" width="25" height="16" rx="2.5" fill="none" stroke="#e3e6ea" stroke-width="1.2" stroke-linejoin="round" stroke-linecap="round"/><path d="M8.5 7V3.5a2.5 2.5 0 0 1 2.5-2.5h5a2.5 2.5 0 0 1 2.5 2.5V7 M1 13h25 M8 11v4 M19 11v4" fill="none" stroke="#e3e6ea" stroke-width="1.2" stroke-linejoin="round" stroke-linecap="round"/></svg>

<div class="rt rtc" style="left:1063.5px;top:108.5px">工具选项板</div>
<svg style="left:1119.5px;top:79px" width="27" height="27" viewBox="0 0 27 27" ><path d="M1 3h7v19H1z M4 1.5h8v20 M7.5 .5h9l5 5v10 M16.5 .5v5h5 M7.5 .5v22h6" fill="none" stroke="#e3e6ea" stroke-width="1.2" stroke-linejoin="round" stroke-linecap="round"/><rect x="13.5" y="15" width="12.5" height="10.5" rx="1.5" fill="#e8eaec"/><rect x="13.5" y="15" width="12.5" height="3.2" rx="1" fill="#2b9bf4"/><path d="M15.5 21h8.5 M15.5 23.5h8.5" stroke="#3a4555" stroke-width="1.1"/></svg>

<div class="rt rtc" style="left:1133px;top:108.5px">图纸集管理器</div>
<div class="abs" style="left:1170.5px;top:74.5px;width:24.5px;height:19.5px;border:1.5px solid #2b7fe8;border-radius:4px;background:#1d2533"></div>
<svg style="left:1174.5px;top:78px" width="17" height="13" viewBox="0 0 17 13" ><rect x=".6" y=".6" width="15.8" height="11.8" rx="1.5" fill="#1d2533" stroke="#e3e6ea" stroke-width="1.2"/><rect x=".6" y=".6" width="15.8" height="3.2" fill="#e3e6ea"/><text x="8.5" y="10.5" text-anchor="middle" font-family="Liberation Sans,sans-serif" font-weight="bold" font-size="5.5" fill="#fff">CMD</text></svg>

<svg style="left:1176.5px;top:98px" width="13" height="14" viewBox="0 0 13 14" ><rect x=".6" y=".6" width="11.8" height="12.8" rx="1" fill="none" stroke="#e3e6ea" stroke-width="1.2" stroke-linejoin="round" stroke-linecap="round"/><path d="M.6 4.5h11.8 M.6 7.5h11.8 M.6 10.5h11.8 M4.5 4.5v9 M8.5 4.5v9" stroke="#e3e6ea" stroke-width="1"/></svg>

<svg style="left:1176.5px;top:117px" width="14" height="14" viewBox="0 0 14 14" ><path d="M1 1h7v2 M1 1v7h2" fill="none" stroke="#e3e6ea" stroke-width="1.2" stroke-linejoin="round" stroke-linecap="round"/><rect x="3.5" y="3.5" width="6" height="6" fill="#2b9bf4"/><rect x="7" y="7" width="6.5" height="6.5" fill="#dfe2e6" stroke="#3a4555" stroke-width=".6"/></svg>

<svg style="left:1210px;top:78.5px" width="14" height="12" viewBox="0 0 14 12" ><rect x=".6" y=".6" width="12.8" height="4.3" rx="1" fill="none" stroke="#e3e6ea" stroke-width="1.2" stroke-linejoin="round" stroke-linecap="round"/><rect x=".6" y="7" width="12.8" height="4.3" rx="1" fill="none" stroke="#e3e6ea" stroke-width="1.2" stroke-linejoin="round" stroke-linecap="round"/><path d="M.6 1h12.8" stroke="#2b9bf4" stroke-width="1.6"/><path d="M.6 7.4h12.8" stroke="#2b9bf4" stroke-width="1.6"/></svg>

<div class="rt" style="left:1226px;top:79px">水平平铺</div>
<svg style="left:1210px;top:98px" width="14" height="12" viewBox="0 0 14 12" ><rect x=".6" y=".6" width="5" height="10.8" rx="1" fill="none" stroke="#e3e6ea" stroke-width="1.2" stroke-linejoin="round" stroke-linecap="round"/><rect x="8.4" y=".6" width="5" height="10.8" rx="1" fill="none" stroke="#e3e6ea" stroke-width="1.2" stroke-linejoin="round" stroke-linecap="round"/><path d="M.6 1h5 M8.4 1h5" stroke="#2b9bf4" stroke-width="1.6"/></svg>

<div class="rt" style="left:1226px;top:98.5px">垂直平铺</div>
<svg style="left:1210px;top:117.5px" width="14" height="13" viewBox="0 0 14 13" ><rect x=".6" y=".6" width="9" height="6.5" rx="1" fill="none" stroke="#e3e6ea" stroke-width="1.2" stroke-linejoin="round" stroke-linecap="round"/><path d="M.6 1.2h9" stroke="#2b9bf4" stroke-width="1.8"/><rect x="4.5" y="5.5" width="9" height="6.5" rx="1" fill="#3a4555" stroke="#e3e6ea" stroke-width="1.2"/></svg>

<div class="rt" style="left:1226px;top:118.5px">层叠</div>
<div class="abs" style="left:1281px;top:74px;width:1px;height:60px;background:#2c3440"></div>
<svg style="left:1292px;top:77.5px" width="28" height="25" viewBox="0 0 28 25" ><rect x="1" y="7" width="25" height="15" rx="2.5" fill="none" stroke="#e3e6ea" stroke-width="1.2" stroke-linejoin="round" stroke-linecap="round"/><path d="M8.5 7V3.5a2.5 2.5 0 0 1 2.5-2.5h5a2.5 2.5 0 0 1 2.5 2.5V7 M1 13h25 M8 11v4 M19 11v4" fill="none" stroke="#e3e6ea" stroke-width="1.2" stroke-linejoin="round" stroke-linecap="round"/><path d="M14.5 14.5h12.5v6.5l-3 3h-9.5z" fill="#2b9bf4"/><path d="M19.5 17v4.5 M21.5 17v3" stroke="#cfe8ff" stroke-width="1"/></svg>

<div class="rt rtc" style="left:1306.5px;top:105px">工具栏</div>
<svg style="left:1315.5px;top:148px" width="7" height="7" viewBox="0 0 7 7" ><path d="M.8.8l5 5 M6 2v4H2" stroke="#e3e6ea" stroke-width="1.2" fill="none"/></svg>

<svg style="left:78px;top:173px" width="16" height="13" viewBox="0 0 16 13" ><path d="M0 1.5h15.5 M0 6.5h15.5 M0 11.5h15.5" stroke="#e0e3e6" stroke-width="1.6"/></svg>

<div class="abs" style="left:104px;top:170px;width:112px;height:19.5px;background:#38414f;border-radius:3px 3px 0 0"></div>
<div class="t" style="left:112px;top:173.5px;font-size:11.5px;font-weight:bold;letter-spacing:-0.2px;color:#f0f1f3" id="dtab">风机（回转式）*</div>
<svg style="left:201.5px;top:174.5px" width="11" height="11" viewBox="0 0 11 11" ><path d="M.8.8l9.4 9.4 M10.2.8L.8 10.2" stroke="#dfe2e6" stroke-width="1.1"/></svg>

<svg style="left:224.5px;top:172px" width="15" height="15" viewBox="0 0 15 15" ><path d="M7.5 0v15 M0 7.5h15" stroke="#dfe2e6" stroke-width="1.2"/></svg>

<div class="abs" style="left:72px;top:189px;width:1535.5px;height:2.3px;background:linear-gradient(#5a626e,#7a828e 50%,#5a626e)"></div>
<div class="abs" style="left:72px;top:765.5px;width:1535.5px;height:2px;background:#eef0f2"></div>
<div class="abs" style="left:72px;top:767.5px;width:1535.5px;height:4.5px;background:#262c36"></div>
<div class="abs" style="left:72px;top:772px;width:1535.5px;height:51px;background:#f7f7f7"></div>
<div class="abs" style="left:72px;top:805px;width:1535.5px;height:1.5px;background:#b4b4b4"></div>
<div class="abs" style="left:1593px;top:772px;width:15px;height:33px;background:#efefef"></div>
<svg style="left:1596px;top:778px" width="9" height="24" viewBox="0 0 9 24" ><path d="M.8 5l3.7-3.7L8.2 5 M.8 18.5l3.7 3.7 3.7-3.7" fill="none" stroke="#444" stroke-width="1.4"/></svg>

<div class="abs" style="left:1520px;top:808px;width:72px;height:14px;background:#efefef"></div>
<div class="abs" style="left:1535.5px;top:808px;width:16px;height:14px;background:#c9c9c9"></div>
<svg style="left:1524px;top:810.5px" width="64" height="9" viewBox="0 0 64 9" ><path d="M5 .8L1.3 4.5 5 8.2 M58.5 .8l3.7 3.7-3.7 3.7" fill="none" stroke="#444" stroke-width="1.4"/></svg>

<div class="abs" style="left:72px;top:823px;width:1535.5px;height:23.3px;background:#262b35;border-radius:0 0 20px 0"></div>
<div class="t" style="left:832.5px;top:831px;font-size:11.2px;color:#f2f3f4" id="coord">2829.5723, 868.1959, 0.0000</div>
<svg style="left:987.8199999999999px;top:827.52px" width="15.959999999999999" height="15.959999999999999" viewBox="0 0 14 14" ><path d="M4 1v12 M9 1v12 M1 4.5h12 M1 9.5h12" stroke="#e3e6ea" stroke-width="1.1"/><rect x="11" y="11.5" width="2.5" height="2.5" fill="#2b9bf4"/></svg>

<svg style="left:1009.02px;top:827.52px" width="15.959999999999999" height="15.959999999999999" viewBox="0 0 14 14" ><path d="M3.5 1v12 M7 1v12 M10.5 1v12 M1 3.5h12 M1 7h12 M1 10.5h12" stroke="#e3e6ea" stroke-width="1.1"/></svg>

<div class="abs" style="left:1029px;top:825.5px;width:19px;height:20px;border:1px solid #2a6fd6;border-radius:3.5px;background:#1b2a44"></div>
<svg style="left:1030.52px;top:827.52px" width="15.959999999999999" height="15.959999999999999" viewBox="0 0 14 14" ><path d="M4 1v6 M1 4h6" stroke="#e3e6ea" stroke-width="1.3"/><rect x="7.5" y="7.5" width="5.5" height="5.5" fill="none" stroke="#e3e6ea" stroke-width="1.2"/></svg>

<svg style="left:1051.62px;top:827.52px" width="15.959999999999999" height="15.959999999999999" viewBox="0 0 14 14" ><path d="M2 1v11.5h11.5 M2 7h5v5.5" fill="none" stroke="#e3e6ea" stroke-width="1.2"/></svg>

<div class="abs" style="left:1071.9px;top:825.5px;width:19px;height:20px;border:1px solid #2a6fd6;border-radius:3.5px;background:#1b2a44"></div>
<svg style="left:1073.42px;top:827.52px" width="15.959999999999999" height="15.959999999999999" viewBox="0 0 14 14" ><circle cx="6.5" cy="7.5" r="5.5" fill="none" stroke="#e3e6ea" stroke-width="1.2"/><path d="M6.5 7.5h6 M6.5 7.5l5-5.5" stroke="#e3e6ea" stroke-width="1.2"/></svg>

<div class="abs" style="left:1093px;top:825.5px;width:19px;height:20px;border:1px solid #2a6fd6;border-radius:3.5px;background:#1b2a44"></div>
<svg style="left:1094.52px;top:827.52px" width="15.959999999999999" height="15.959999999999999" viewBox="0 0 14 14" ><rect x="1.5" y="2" width="10.5" height="10.5" fill="none" stroke="#e3e6ea" stroke-width="1.2"/><circle cx="12" cy="2" r="1.6" fill="#2b9bf4"/></svg>

<div class="abs" style="left:1115.4px;top:825.5px;width:19px;height:20px;border:1px solid #2a6fd6;border-radius:3.5px;background:#1b2a44"></div>
<svg style="left:1116.92px;top:827.52px" width="15.959999999999999" height="15.959999999999999" viewBox="0 0 14 14" ><path d="M1 13h12 M2.5 11L12 1.5" stroke="#e3e6ea" stroke-width="1.2"/><path d="M4 3.5l7.5 7" stroke="#2b9bf4" stroke-width="1.3"/></svg>

<svg style="left:1138.42px;top:827.52px" width="15.959999999999999" height="15.959999999999999" viewBox="0 0 14 14" ><path d="M8.5 1v12 M1 7.5h12" stroke="#e3e6ea" stroke-width="2.2"/></svg>

<div class="abs" style="left:1158px;top:825.5px;width:19px;height:20px;border:1px solid #2a6fd6;border-radius:3.5px;background:#1b2a44"></div>
<svg style="left:1159.52px;top:827.52px" width="15.959999999999999" height="15.959999999999999" viewBox="0 0 14 14" ><rect x="1" y="1" width="12" height="12" fill="none" stroke="#e3e6ea" stroke-width="1.1"/><path d="M1 1h4v4H1z M9 1h4v4H9z M5 5h4v4H5z M1 9h4v4H1z M9 9h4v4H9z" fill="#e3e6ea"/></svg>

<div class="abs" style="left:1179.9px;top:825.5px;width:19px;height:20px;border:1px solid #2a6fd6;border-radius:3.5px;background:#1b2a44"></div>
<svg style="left:1181.42px;top:827.52px" width="15.959999999999999" height="15.959999999999999" viewBox="0 0 14 14" ><path d="M12.5 7.5A5.5 5.5 0 1 1 9.5 2.3" fill="none" stroke="#e3e6ea" stroke-width="1.2"/><path d="M7 4.5v6 M4 7.5h6" stroke="#e3e6ea" stroke-width="1.2"/><path d="M9 .5l3.5 1.5-2 2.8z" fill="#e3e6ea"/></svg>

<svg style="left:1203.52px;top:827.52px" width="15.959999999999999" height="15.959999999999999" viewBox="0 0 14 14" ><path d="M1 2h12 M1 12h12" stroke="#e3e6ea" stroke-width="1.2"/><path d="M1 5.5h12 M1 8.5h12" stroke="#2b9bf4" stroke-width="1.1" stroke-dasharray="2 1"/></svg>

<svg style="left:1225.72px;top:827.52px" width="15.959999999999999" height="15.959999999999999" viewBox="0 0 14 14" ><path d="M0 2h11" stroke="#2b9bf4" stroke-width="1.3" stroke-dasharray="2 1.2"/><path d="M6 5l7.5 3.5-3 1 2 3-1.3.9-2-3-2.2 2.2z" fill="#e3e6ea"/></svg>

<svg style="left:1247.02px;top:827.52px" width="15.959999999999999" height="15.959999999999999" viewBox="0 0 14 14" ><path d="M1 4l6-2.5L13 4 7 6.5z M2 7.5l5 2 3-1.2 M2 10.5l5 2 2-.8" fill="none" stroke="#e3e6ea" stroke-width="1.1"/><path d="M12 7l-2.5 3.5h2l-1 3 3-4h-2z" fill="#2b9bf4"/></svg>

<svg style="left:1268.42px;top:827.52px" width="15.959999999999999" height="15.959999999999999" viewBox="0 0 14 14" ><circle cx="6" cy="6" r="5" fill="none" stroke="#e3e6ea" stroke-width="1.2"/><path d="M9.8 9.8l3.5 3.5" stroke="#e3e6ea" stroke-width="1.4"/><path d="M3.5 6a2.5 2.5 0 0 1 2.5-2.5" stroke="#e3e6ea" stroke-width=".9" fill="none"/></svg>

<div class="abs" style="left:1287.8px;top:825.5px;width:19px;height:20px;border:1px solid #2a6fd6;border-radius:3.5px;background:#1b2a44"></div>
<svg style="left:1289.32px;top:827.52px" width="15.959999999999999" height="15.959999999999999" viewBox="0 0 14 14" ><rect x="4.5" y="1" width="9" height="7" rx="1" fill="#cfe4fa" stroke="#2b9bf4" stroke-width="1"/><rect x="6.5" y="3" width="5" height="2.5" fill="#2b9bf4"/><rect x="1" y="6" width="9" height="7" rx="1" fill="#2b9bf4"/></svg>

<svg style="left:1311.62px;top:827.52px" width="15.959999999999999" height="15.959999999999999" viewBox="0 0 14 14" ><path d="M7 1.5L9.2 6 7 8.2 4.8 6z M6.4 8.8L4.6 12.5H.800L3.6 7.3z M7.6 8.8L9.4 12.5H13.2L10.4 7.3z" fill="#e3e6ea"/></svg>

<div class="t" style="left:1333px;top:830.3px;font-size:12.5px;letter-spacing:-0.5px;color:#f2f3f4">1:1</div>
<div class="ar" style="left:1351.5px;top:833.5px;border-left-width:3px;border-right-width:3px;border-top-width:3.5px"></div>
<svg style="left:1361.32px;top:827.52px" width="15.959999999999999" height="15.959999999999999" viewBox="0 0 14 14" ><path d="M7 1.5L9.2 6 7 8.2 4.8 6z M6.4 8.8L4.6 12.5H.800L3.6 7.3z M7.6 8.8L9.4 12.5H13.2L10.4 7.3z" fill="#e3e6ea"/><circle cx="10.8" cy="3" r="2.3" fill="#f39a1e"/><path d="M10 5.5h1.6" stroke="#f39a1e" stroke-width="1"/></svg>

<svg style="left:1382.82px;top:827.52px" width="15.959999999999999" height="15.959999999999999" viewBox="0 0 14 14" ><path d="M7 1.5L9.2 6 7 8.2 4.8 6z M6.4 8.8L4.6 12.5H.800L3.6 7.3z M7.6 8.8L9.4 12.5H13.2L10.4 7.3z" fill="#e3e6ea"/><path d="M11.5 0L9 3.8h2l-1.2 3.2 3.4-4.3h-2.1z" fill="#2b9bf4" stroke="#262b35" stroke-width=".4"/></svg>

<svg style="left:1404.02px;top:827.52px" width="15.959999999999999" height="15.959999999999999" viewBox="0 0 14 14" ><rect x="1" y="1" width="12" height="12" fill="#e3e6ea"/><path d="M4 1v12 M1 5h12 M1 9h12" stroke="#262b35" stroke-width="1"/></svg>

<svg style="left:1464.02px;top:827.52px" width="15.959999999999999" height="15.959999999999999" viewBox="0 0 14 14" ><circle cx="7" cy="7" r="3.3" fill="none" stroke="#e3e6ea" stroke-width="2.6"/><path d="M7 .5v13 M.5 7h13 M2.4 2.4l9.2 9.2 M11.6 2.4l-9.2 9.2" stroke="#e3e6ea" stroke-width="2" stroke-dasharray="2.3 8.4"/><circle cx="7" cy="7" r="1.8" fill="#262b35"/></svg>

<svg style="left:1485.72px;top:827.52px" width="15.959999999999999" height="15.959999999999999" viewBox="0 0 14 14" ><path d="M4 6V4a3 3 0 0 1 6 0" fill="none" stroke="#2b9bf4" stroke-width="1.4"/><rect x="2.5" y="6" width="9" height="7" rx="1" fill="#2b9bf4"/></svg>

<svg style="left:1498.02px;top:827.52px" width="15.959999999999999" height="15.959999999999999" viewBox="0 0 14 14" ><path d="M7 0a4.5 4.5 0 0 0-2.5 8.2V10.5h5V8.2A4.5 4.5 0 0 0 7 0z" fill="#f39a1e"/><path d="M5 12h4 M5.5 13.6h3" stroke="#f39a1e" stroke-width="1.1"/></svg>

<svg style="left:1515.82px;top:827.52px" width="15.959999999999999" height="15.959999999999999" viewBox="0 0 14 14" ><circle cx="7" cy="7" r="5.8" fill="none" stroke="#e3e6ea" stroke-width="1.1"/><path d="M7 7L3.5 4 M7 7h3.5" stroke="#e3e6ea" stroke-width="1.1"/></svg>

<svg style="left:1532.02px;top:827.52px" width="15.959999999999999" height="15.959999999999999" viewBox="0 0 14 14" ><rect x="1" y="1" width="12" height="12" fill="none" stroke="#e3e6ea" stroke-width="1.1"/><path d="M4 10l6-6 M7 4h3v3" fill="none" stroke="#e3e6ea" stroke-width="1.1"/></svg>

<div class="t" style="left:1553.5px;top:830px;font-size:12px;letter-spacing:-0.3px;color:#f2f3f4">GstarCAD</div>
<svg style="left:1440px;top:825px" width="80" height="55" viewBox="0 0 80 55" ><path d="M10 28.3L50 8.5 61.5 19 57 21 50 14.5 22 28.3z" fill="#1e9be8"/><path d="M23 26.5l17.5-8.5 0 3.5 -6 3 0 0 6.5-1.5 V42l-18 1.7z" fill="#1e9be8"/><path d="M28.5 27.5l6-2v4.5l-6 1.5z M28.5 34l6-1.3v4.5l-6 1z" fill="#fff"/><path d="M41 24.5c6-1 12-3.5 18-7v3.2c-6 3.5-12 6-18 7z M41 31.5c6-1 12-3.5 18-7v3.2c-6 3.5-12 6-18 7z M41 38.5c6-1 12-3.5 18-7v3.2c-6 3.5-12 6-18 7z" fill="#1e9be8"/><g fill="#1e9be8"><rect x="59.5" y="20" width="3.2" height="3.2" transform="rotate(-25 61 21.5)"/><rect x="63.5" y="23.5" width="3" height="3" transform="rotate(-25 65 25)"/><rect x="60" y="27" width="3.2" height="3.2" transform="rotate(-25 61.5 28.5)"/><rect x="64" y="30.5" width="3" height="3" transform="rotate(-25 65.5 32)"/><rect x="60.5" y="34" width="3" height="3" transform="rotate(-25 62 35.5)"/><rect x="67" y="27" width="2.5" height="2.5" transform="rotate(-25 68 28)"/><rect x="66.5" y="34.5" width="2.5" height="2.5" transform="rotate(-25 67.5 35.5)"/><rect x="63" y="16.5" width="2.5" height="2.5" transform="rotate(-25 64 17.5)"/></g><defs><linearGradient id="wrf" x1="0" x2="0" y1="0" y2="1"><stop offset="0" stop-color="#1e9be8" stop-opacity=".28"/><stop offset="1" stop-color="#1e9be8" stop-opacity="0"/></linearGradient></defs><path d="M22.5 44.5l18.5-1.5 18-5v6l-18 4-18.5 1.5z" fill="url(#wrf)"/></svg>

<div class="t" style="left:1518.5px;top:832.8px;font-size:19px;font-weight:900;color:#33373e;letter-spacing:0px;-webkit-mask-image:linear-gradient(rgba(0,0,0,.55) 0,rgba(0,0,0,.55) 69%,#000 71%);mask-image:linear-gradient(rgba(0,0,0,.55) 0,rgba(0,0,0,.55) 69%,#000 71%)" id="wm1">系统之家</div>
<div class="t" style="left:1517.5px;top:858.2px;font-size:7.7px;font-weight:bold;color:#3a3c40;letter-spacing:0.52px" id="wm2">XITONGZHIJIA.NET</div>
<div class="t" style="left:1517.5px;top:866.2px;font-size:7.7px;font-weight:bold;color:#3a3c40;letter-spacing:0.52px;transform:scaleY(-1);opacity:.4;-webkit-mask-image:linear-gradient(transparent 15%,#000)">XITONGZHIJIA.NET</div>
<div class="abs" style="left:-0.5px;top:724.2px;width:806.7px;height:157px;border-radius:17px;background:linear-gradient(90deg,#1c72ff 0%,#1f7eff 30%,#2cb4ff 55%,#39d8ff 72%,#3be0ff 100%)"></div>
<div class="abs" id="cmdin" style="left:5.5px;top:729.7px;width:795px;height:145.3px;border-radius:12px;background:#2b303b;overflow:hidden"><div class="abs" style="left:0;top:0;width:54px;height:100%;background:#37414f"></div><div class="abs" style="left:54px;top:5.5px;width:741px;height:136.5px;background:#f6f6f6;border-left:2.5px solid #9a9a9a;border-top:1.5px solid #6a6a6a"></div><div class="abs" style="left:54px;top:95px;width:741px;height:2.5px;background:#9c9c9c"></div><div class="abs" style="left:54px;top:97.5px;width:741px;height:1.5px;background:#d8d8d8"></div><div class="abs" style="left:56.5px;top:0;width:741px;height:10px;background:linear-gradient(#2b303b 0,#2b303b 45%,#8d9197 70%,rgba(246,246,246,0) 100%)"></div></div>
<div class="abs" style="left:17px;top:737px;width:33px;height:8px;background:repeating-linear-gradient(#8c939c 0,#8c939c 1.3px,#4a5563 1.3px,#4a5563 2.7px)"></div>
<svg style="left:18.5px;top:755px" width="29" height="29" viewBox="0 0 29 29" ><path d="M1 1l27 27 M28 1L1 28" stroke="#d4d8dc" stroke-width="2.2"/></svg>

<svg style="left:17px;top:800px" width="32" height="32" viewBox="0 0 32 32" ><path d="M3 24.5L19.5 4a3.6 3.6 0 0 1 5.5 4.5L8.5 29H3z M17 7l5.5 4.5" fill="none" stroke="#d4d8dc" stroke-width="2.1" stroke-linejoin="round"/><path d="M19 24h11 M15.5 29h14.5" stroke="#d4d8dc" stroke-width="2.1"/></svg>

<div class="abs cl" style="left:70px;top:741.3px;font-family:'Liberation Mono','Noto Serif CJK SC',monospace;font-size:29.3px;color:#141414;-webkit-text-stroke:0.45px #141414;line-height:1;white-space:pre;letter-spacing:0"><span class="cj">命令</span>:ENGINEERINGVIEWMODE</div>
<div class="abs cl" style="left:70px;top:783.5px;font-family:'Liberation Mono','Noto Serif CJK SC',monospace;font-size:29.3px;color:#141414;-webkit-text-stroke:0.45px #141414;line-height:1;white-space:pre;letter-spacing:0"><span class="cj">输入</span> ENGINEERINGVIEWMODE <span class="cj cj2">的新值</span> &lt;0&gt;: 1</div>
<div class="abs cl" style="left:70px;top:830px;font-family:'Liberation Mono','Noto Serif CJK SC',monospace;font-size:29.3px;color:#141414;-webkit-text-stroke:0.45px #141414;line-height:1;white-space:pre;letter-spacing:0"><span class="cj">命令</span>:</div>
</div>
</body></html>
